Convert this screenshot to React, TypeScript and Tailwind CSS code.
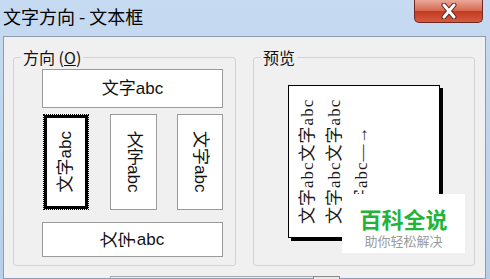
export default function App() {
  const box = "bg-white border border-[#9a9a9a] flex items-center justify-center";
  const sansTxt = "font-['Liberation_Sans','Noto_Sans_CJK_SC',sans-serif] text-[17px] text-[#111]";
  return (
    <div className="w-[490px] h-[279px] overflow-hidden relative bg-[linear-gradient(to_bottom,#c6dbf1,#b8cfe9)] font-['Noto_Sans_CJK_SC',sans-serif]">
      <div className="h-[36px] flex items-start justify-between">
        <div className="pl-[3px] pt-[4px] text-[18px] leading-[24px] text-black">文字方向 - 文本框</div>
        <div className="mr-[7px] w-[69px] h-[23px] rounded-b-[5px] border border-t-0 border-[#6e2a22] bg-[linear-gradient(to_bottom,#eaa89a,#d8684f_48%,#c33b22_52%,#d45a3e)] flex items-center justify-center">
          <svg width="20" height="16" viewBox="0 0 20 16">
            <path d="M5 2 L15 14 M15 2 L5 14" stroke="#5a2018" strokeWidth="5" strokeLinecap="round" fill="none" />
            <path d="M5 2 L15 14 M15 2 L5 14" stroke="#ffffff" strokeWidth="3" strokeLinecap="round" fill="none" />
          </svg>
        </div>
      </div>
      <div className="ml-[3px] w-[483px] h-[243px] border border-[#8d9cb0] bg-[#f0f0f0] pl-[9px] pt-[10px]">
        <div className="flex gap-[17px]">
          <fieldset className="w-[223px] h-[219px] border border-[#d3d3d3] rounded-[3px]">
            <legend className="ml-[7px] px-[2px] text-[16px] leading-[20px] text-[#111]">
              方向 (<span className="underline">O</span>)
            </legend>
            <div className="pl-[28px] pt-[2px] w-[210px]">
              <div className={`${box} ${sansTxt} w-[181px] h-[39px]`}>文字abc</div>
              <div className="mt-[6px] flex justify-between px-[1px] h-[96px]">
                <div className="w-[46px] h-[96px] border border-dotted border-black">
                  <div className={`h-full border-[3px] border-black bg-white flex items-center justify-center ${sansTxt}`}>
                    <div className="[writing-mode:vertical-rl] [text-orientation:sideways] rotate-180">文字abc</div>
                  </div>
                </div>
                <div className={`${box} ${sansTxt} w-[47px] h-[96px]`}>
                  <div className="[writing-mode:vertical-rl] [text-orientation:mixed]">文字abc</div>
                </div>
                <div className={`${box} ${sansTxt} w-[46px] h-[96px]`}>
                  <div className="[writing-mode:vertical-rl] [text-orientation:sideways]">文字abc</div>
                </div>
              </div>
              <div className={`${box} ${sansTxt} mt-[12px] w-[181px] h-[35px] gap-[1px]`}>
                <span className="inline-block -rotate-90">文</span>
                <span className="inline-block -rotate-90">字</span>
                <span>abc</span>
              </div>
            </div>
          </fieldset>
          <fieldset className="w-[222px] h-[219px] border border-[#d3d3d3] rounded-[3px]">
            <legend className="ml-[7px] px-[2px] text-[16px] leading-[20px] text-[#111]">预览</legend>
            <div className="pl-[34px] pt-[18px]">
              <div className="w-[152px] h-[153px] bg-white border border-black shadow-[3px_3px_0_#000]">
                <div className="w-full h-full [writing-mode:vertical-rl] [text-orientation:sideways] rotate-180 font-['Liberation_Serif','Noto_Sans_CJK_SC',serif] text-[17px] leading-[27px] tracking-[1px] pt-[13px] pr-[5px] text-[#1a1a1a]">
                  <div>文字abc文字abc</div>
                  <div>文字abc文字abc</div>
                  <div>文字abc—→</div>
                </div>
              </div>
            </div>
          </fieldset>
        </div>
        <div className="mt-[10px] ml-[97px] w-[230px] h-[20px] flex">
          <div className="flex-1 border-t border-l border-[#a8a8a8]" />
          <div className="w-[27px] border border-[#8a8a8a] bg-[#e6e6e6]" />
        </div>
      </div>
      <div className="absolute left-[342px] top-[194px] w-[123px] h-[59px] bg-white flex flex-col items-center">
        <div className="mt-[13px] text-[22px] leading-[22px] font-bold text-[#22b43a]">百科全说</div>
        <div className="mt-[4px] text-[13px] leading-[16px] text-[#9a9a9a]">助你轻松解决</div>
      </div>
    </div>
  );
}
